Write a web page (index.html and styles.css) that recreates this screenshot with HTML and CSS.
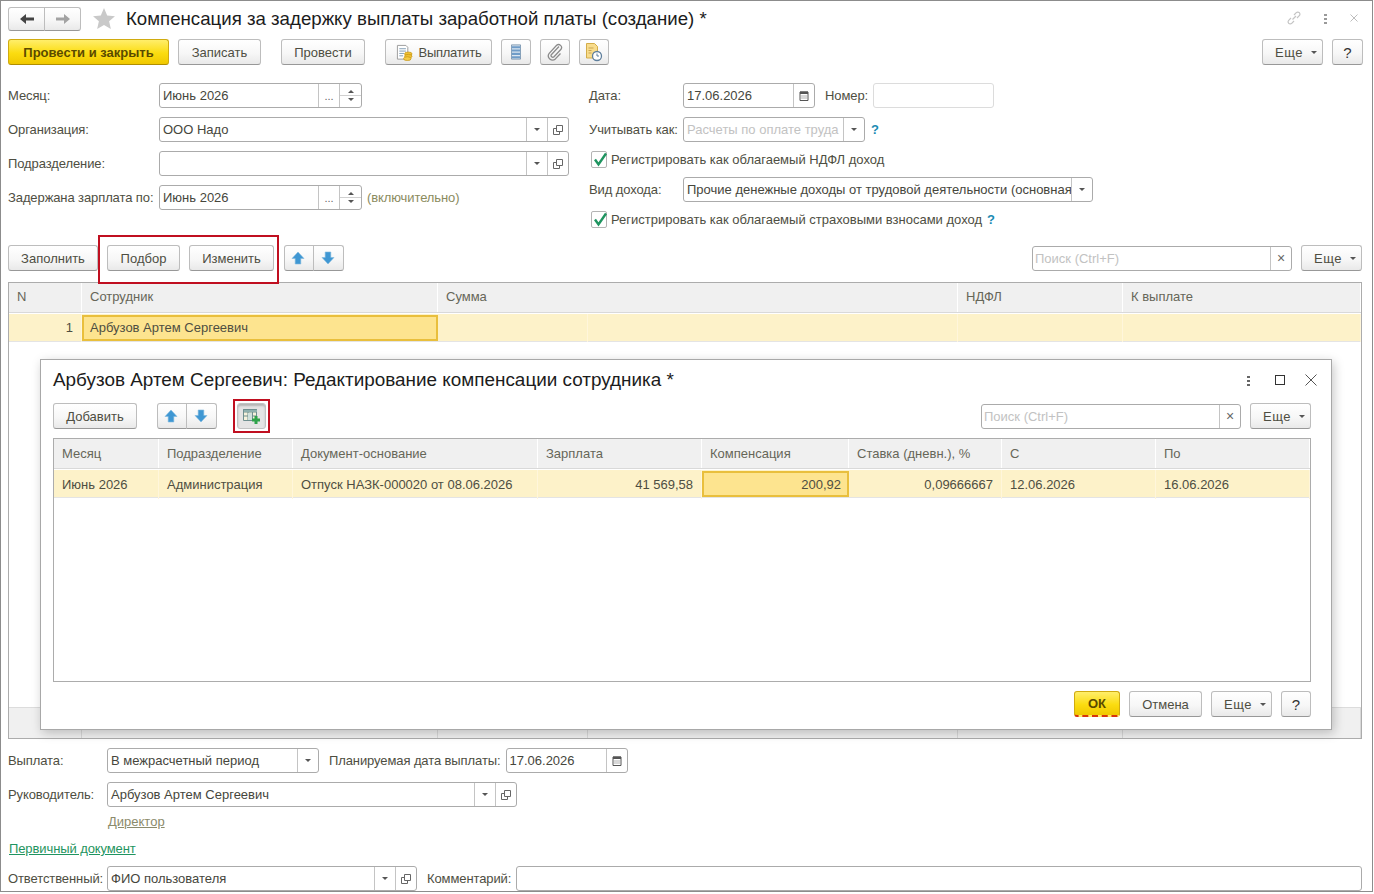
FILE: index.html
```html
<!DOCTYPE html>
<html lang="ru">
<head>
    <meta charset="UTF-8">
    <title>Компенсация за задержку выплаты заработной платы (создание)</title>
    <link rel="stylesheet" href="styles.css">
</head>
<body>
    <svg class="sprite" width="0" height="0">
        <symbol id="i-up" viewBox="0 0 14 14"><path d="M7 1 13 7.500H9.800V13H4.200V7.500H1Z" fill="#3f97d3" stroke="#7fb9de" stroke-width=".6"/></symbol>
        <symbol id="i-down" viewBox="0 0 14 14"><path d="M7 13 13 6.500H9.800V1H4.200V6.500H1Z" fill="#3f97d3" stroke="#7fb9de" stroke-width=".6"/></symbol>
        <symbol id="i-cal" viewBox="0 0 10 11"><path d="M1 2h8v8.500H1z" fill="#fff" stroke="#555"/><path d="M1 1.500h8V4H1z" fill="#555"/><path d="M2.500 5.500h1v1h-1zM4.500 5.500h1v1h-1zM6.500 5.500h1v1h-1zM2.500 7.500h1v1h-1zM4.500 7.500h1v1h-1zM6.500 7.500h1v1h-1z" fill="#666"/></symbol>
        <symbol id="i-open" viewBox="0 0 10 10"><path d="M3.500.500h6v6h-6z" fill="#fff" stroke="#666"/><path d="M.500 3.500h3M.500 3.500v6h6v-3" fill="none" stroke="#666"/></symbol>
    </svg>

    <div class="window">
        <header class="title-bar">
            <div class="btn-group nav-group">
                <button class="btn nav-btn"><svg width="16" height="12" viewBox="0 0 16 12"><path d="M1 6 7 1V4.500H15V7.500H7V11Z" fill="#444"/></svg></button>
                <button class="btn nav-btn"><svg width="16" height="12" viewBox="0 0 16 12"><path d="M15 6 9 1V4.500H1V7.500H9V11Z" fill="#a3a3a3"/></svg></button>
            </div>
            <svg class="star" width="22" height="21" viewBox="0 0 24 23"><path d="M12 0 15.500 8.300 24 9 17.600 14.600 19.500 23 12 18.500 4.500 23 6.400 14.600 0 9 8.500 8.300Z" fill="#c9c9c9"/></svg>
            <h1 class="doc-title">Компенсация за задержку выплаты заработной платы (создание) *</h1>
            <div class="window-tools">
                <svg width="16" height="16" viewBox="0 0 16 16"><path d="M6.500 9.500 10 6M5 8 2.700 10.300a2.100 2.100 0 0 0 3 3L8 11M8 5 10.300 2.700a2.100 2.100 0 0 1 3 3L11 8" fill="none" stroke="#c4c4c4" stroke-width="1.200"/></svg>
                <span class="dots dots-light"></span>
                <svg width="10" height="10" viewBox="0 0 10 10"><path d="M1.500 1.500 8.500 8.500M8.500 1.500 1.500 8.500" stroke="#bdbdbd"/></svg>
            </div>
        </header>

        <div class="command-bar">
            <button class="btn btn-primary btn-post-close">Провести и закрыть</button>
            <button class="btn btn-save">Записать</button>
            <button class="btn btn-post">Провести</button>
            <button class="btn btn-pay">
                <svg width="17" height="17" viewBox="0 0 18 18"><path d="M1.500 1.500h9l2 2V16h-11z" fill="#fff" stroke="#9a9a9a"/><path d="M3.500 5h7M3.500 7.500h7M3.500 10h5M3.500 12.500h4" stroke="#7d9bb5"/><ellipse cx="13" cy="10.500" rx="4" ry="2" fill="#f1c232" stroke="#c08f10" stroke-width=".7"/><ellipse cx="13" cy="13" rx="4" ry="2" fill="#f1c232" stroke="#c08f10" stroke-width=".7"/><ellipse cx="12" cy="15.500" rx="4" ry="2" fill="#f5cc47" stroke="#c08f10" stroke-width=".7"/></svg>
                <span>Выплатить</span>
            </button>
            <button class="btn btn-icon">
                <svg width="10" height="16" viewBox="0 0 12 18"><path d="M.500 .500h11v17H.500z" fill="#dbe6f0" stroke="#6d8aa6"/><path d="M1 2h10v2.500H1zM1 6h10v2.500H1zM1 10h10v2.500H1zM1 14h10v2.500H1z" fill="#6f9cc8"/></svg>
            </button>
            <button class="btn btn-icon">
                <svg width="18" height="18" viewBox="0 0 18 18"><path d="M13 3.500 5.500 11.500a1.700 1.700 0 0 0 2.500 2.300L15 6.300a3 3 0 0 0-4.400-4L3.200 10.300a4.200 4.200 0 0 0 6.200 5.600L14.500 10.500" fill="none" stroke="#8b8b8b" stroke-width="1.300"/></svg>
            </button>
            <button class="btn btn-icon">
                <svg width="18" height="20" viewBox="0 0 18 20"><path d="M1.500 1.500h8l3 3V16h-11z" fill="#f8dc8c" stroke="#d3ad4a"/><path d="M3.500 6h5M3.500 8.500h3M3.500 11h3" stroke="#c9a550"/><circle cx="12" cy="14" r="4.500" fill="#fff" stroke="#5f7f9c" stroke-width="1.300"/><path d="M12 11.500V14H14" fill="none" stroke="#5f7f9c"/></svg>
            </button>
            <button class="btn btn-more push-right"><span>Еще</span><i class="caret"></i></button>
            <button class="btn btn-help">?</button>
        </div>

        <div class="form-top">
            <div class="form-col form-left">
                <div class="form-row">
                    <label>Месяц:</label>
                    <div class="field field-month"><span class="field-text">Июнь 2026</span><span class="field-btn">...</span><span class="field-spin"><i class="tri-up"></i><i class="tri-down"></i></span></div>
                </div>
                <div class="form-row">
                    <label>Организация:</label>
                    <div class="field field-org"><span class="field-text">ООО Надо</span><span class="field-btn"><i class="tri-down"></i></span><span class="field-btn"><svg width="10" height="10"><use href="#i-open"/></svg></span></div>
                </div>
                <div class="form-row">
                    <label>Подразделение:</label>
                    <div class="field field-org"><span class="field-text"></span><span class="field-btn"><i class="tri-down"></i></span><span class="field-btn"><svg width="10" height="10"><use href="#i-open"/></svg></span></div>
                </div>
                <div class="form-row">
                    <label>Задержана зарплата по:</label>
                    <div class="field field-month"><span class="field-text">Июнь 2026</span><span class="field-btn">...</span><span class="field-spin"><i class="tri-up"></i><i class="tri-down"></i></span></div>
                    <span class="note">(включительно)</span>
                </div>
            </div>

            <div class="form-col form-right">
                <div class="form-row">
                    <label>Дата:</label>
                    <div class="field field-date"><span class="field-text">17.06.2026</span><span class="field-btn"><svg width="10" height="11"><use href="#i-cal"/></svg></span></div>
                    <span class="inline-label">Номер:</span>
                    <div class="field field-number"></div>
                </div>
                <div class="form-row">
                    <label>Учитывать как:</label>
                    <div class="field field-account"><span class="field-text is-disabled">Расчеты по оплате труда</span><span class="field-btn"><i class="tri-down"></i></span></div>
                    <span class="hint hint-account">?</span>
                </div>
                <div class="check-row">
                    <span class="checkbox"><svg width="16" height="16" viewBox="0 0 16 16"><path d="M3 7.500 6.500 12.500 14 1.500" fill="none" stroke="#1f9460" stroke-width="2.400"/></svg></span>
                    <span>Регистрировать как облагаемый НДФЛ доход</span>
                </div>
                <div class="form-row">
                    <label>Вид дохода:</label>
                    <div class="field field-income"><span class="field-text">Прочие денежные доходы от трудовой деятельности (основная</span><span class="field-btn"><i class="tri-down"></i></span></div>
                </div>
                <div class="check-row">
                    <span class="checkbox"><svg width="16" height="16" viewBox="0 0 16 16"><path d="M3 7.500 6.500 12.500 14 1.500" fill="none" stroke="#1f9460" stroke-width="2.400"/></svg></span>
                    <span>Регистрировать как облагаемый страховыми взносами доход</span>
                    <span class="hint">?</span>
                </div>
            </div>
        </div>

        <div class="table-bar">
            <button class="btn btn-fill">Заполнить</button>
            <button class="btn btn-pick">Подбор</button>
            <button class="btn btn-edit">Изменить</button>
            <div class="btn-group arrows">
                <button class="btn arrow-btn"><svg width="14" height="14"><use href="#i-up"/></svg></button>
                <button class="btn arrow-btn"><svg width="14" height="14"><use href="#i-down"/></svg></button>
            </div>
            <div class="field field-search push-right"><span class="field-text is-placeholder">Поиск (Ctrl+F)</span><span class="field-btn clear-x">×</span></div>
            <button class="btn btn-more"><span>Еще</span><i class="caret"></i></button>
        </div>

        <div class="grid-table main-table">
            <div class="grid-head">
                <div>N</div><div>Сотрудник</div><div class="span-2">Сумма</div><div>НДФЛ</div><div>К выплате</div>
            </div>
            <div class="grid-row">
                <div class="num">1</div><div class="cell-active">Арбузов Артем Сергеевич</div><div></div><div></div><div></div><div></div>
            </div>
            <div class="grid-foot">
                <div></div><div></div><div></div><div></div><div></div><div></div>
            </div>
        </div>

        <div class="form-row bottom-first">
            <label class="label-bottom">Выплата:</label>
            <div class="field field-pay"><span class="field-text">В межрасчетный период</span><span class="field-btn"><i class="tri-down"></i></span></div>
            <span class="inline-label">Планируемая дата выплаты:</span>
            <div class="field field-paydate"><span class="field-text">17.06.2026</span><span class="field-btn"><svg width="10" height="11"><use href="#i-cal"/></svg></span></div>
        </div>
        <div class="form-row bottom-row">
            <label class="label-bottom">Руководитель:</label>
            <div class="field field-head"><span class="field-text">Арбузов Артем Сергеевич</span><span class="field-btn"><i class="tri-down"></i></span><span class="field-btn"><svg width="10" height="10"><use href="#i-open"/></svg></span></div>
        </div>
        <a class="link-post">Директор</a>
        <a class="link-doc">Первичный документ</a>
        <div class="form-row bottom-last">
            <label class="label-bottom">Ответственный:</label>
            <div class="field field-user"><span class="field-text">ФИО пользователя</span><span class="field-btn"><i class="tri-down"></i></span><span class="field-btn"><svg width="10" height="10"><use href="#i-open"/></svg></span></div>
            <span class="inline-label">Комментарий:</span>
            <div class="field field-comment"></div>
        </div>

        <!-- annotation over the main toolbar -->
        <div class="red-box red-box-main"></div>

        <section class="dialog">
            <header class="dialog-head">
                <h2 class="dialog-title">Арбузов Артем Сергеевич: Редактирование компенсации сотрудника *</h2>
                <div class="dialog-tools">
                    <span class="dots"></span>
                    <span class="maximize"></span>
                    <svg width="12" height="12" viewBox="0 0 12 12"><path d="M.500 .500 11.500 11.500M11.500 .500 .500 11.500" stroke="#555"/></svg>
                </div>
            </header>
            <div class="dialog-bar">
                <button class="btn btn-add">Добавить</button>
                <div class="btn-group arrows-dialog">
                    <button class="btn arrow-btn"><svg width="14" height="14"><use href="#i-up"/></svg></button>
                    <button class="btn arrow-btn"><svg width="14" height="14"><use href="#i-down"/></svg></button>
                </div>
                <button class="btn btn-table-add">
                    <svg width="18" height="16" viewBox="0 0 18 16"><path d="M.500 1.500h13v11H.500z" fill="#f6f2dc" stroke="#6f8f8f"/><path d="M.500 1.500h13V4H.500zM5 1.500v11M9.500 1.500v11M.500 8h13" fill="none" stroke="#6f8f8f"/><path d="M1 2h13v2H1z" fill="#8fb0ae"/><path d="M5 5h4v7H5z" fill="#cfe0dc"/><path d="M11.500 8h3v2.500H17v3h-2.500V16h-3v-2.500H9v-3h2.500z" fill="#2fa24a"/></svg>
                </button>
                <div class="field field-search push-right"><span class="field-text is-placeholder">Поиск (Ctrl+F)</span><span class="field-btn clear-x">×</span></div>
                <button class="btn btn-more"><span>Еще</span><i class="caret"></i></button>
            </div>
            <div class="grid-table dialog-table">
                <div class="grid-head">
                    <div>Месяц</div><div>Подразделение</div><div>Документ-основание</div><div>Зарплата</div><div>Компенсация</div><div>Ставка (дневн.), %</div><div>С</div><div>По</div>
                </div>
                <div class="grid-row">
                    <div>Июнь 2026</div><div>Администрация</div><div>Отпуск НАЗК-000020 от 08.06.2026</div><div class="num">41 569,58</div><div class="num cell-active">200,92</div><div class="num">0,09666667</div><div>12.06.2026</div><div>16.06.2026</div>
                </div>
            </div>
            <div class="dialog-actions">
                <button class="btn btn-primary btn-ok">ОК</button>
                <button class="btn btn-cancel">Отмена</button>
                <button class="btn btn-more"><span>Еще</span><i class="caret"></i></button>
                <button class="btn btn-help">?</button>
            </div>
            <div class="red-box red-box-dialog"></div>
        </section>
    </div>
</body>
</html>
```

FILE: styles.css
```css
* {
    box-sizing: border-box;
}
html, body {
    margin: 0;
    background: #fff;
}
body {
    font-family: "Liberation Sans", Arial, sans-serif;
    font-size: 13px;
    color: #4e4e42;
}
.sprite {
    position: absolute;
}
.window {
    position: relative;
    width: 1373px;
    height: 892px;
    padding: 0 9px 0 7px;
    border: 1px solid #8c8c8c;
    display: flex;
    flex-direction: column;
}
label {
    white-space: nowrap;
    letter-spacing: -0.1px;
}

/* Buttons */
.btn {
    display: inline-flex;
    align-items: center;
    justify-content: center;
    height: 26px;
    padding: 0;
    font: inherit;
    color: #4e4e42;
    background: linear-gradient(#fff, #f7f7f7 55%, #e9e9e9);
    border: 1px solid #bdbdbd;
    border-bottom-color: #989898;
    border-radius: 3px;
    flex: none;
}
.btn-primary {
    color: #5a4a00;
    font-weight: bold;
    background: linear-gradient(#ffee6a, #fbdc10 55%, #f0c800);
    border-color: #d0ab10;
    border-bottom-color: #b08e00;
}
.btn-post-close { width: 161px; }
.btn-save { width: 83px; margin-left: 9px; }
.btn-post { width: 84px; margin-left: 20px; }
.btn-pay { width: 107px; margin-left: 20px; gap: 6px; letter-spacing: -0.3px; }
.btn-icon { width: 30px; margin-left: 9px; }
.btn-more { width: 61px; gap: 8px; padding-left: 7px; letter-spacing: 0.5px; }
.btn-help { width: 31px; margin-left: 9px; color: #333; font-size: 15px; }
.push-right { margin-left: auto; }
.caret {
    width: 0;
    height: 0;
    border: 3px solid transparent;
    border-top: 3px solid #555;
    border-bottom: 0;
}
.btn-group {
    display: flex;
    flex: none;
}
.btn-group .btn {
    border-radius: 0;
}
.btn-group .btn:first-child {
    border-radius: 3px 0 0 3px;
}
.btn-group .btn:last-child {
    margin-left: -1px;
    border-radius: 0 3px 3px 0;
}

/* Title */
.title-bar {
    height: 38px;
    display: flex;
    align-items: center;
    flex: none;
}
.nav-group {
    margin-top: -3px;
}
.nav-btn {
    width: 37px;
    height: 24px;
}
.star {
    margin-left: 12px;
    margin-top: -3px;
}
.doc-title {
    margin: -3px 0 0 11px;
    font-size: 18.67px;
    font-weight: normal;
    color: #1c1c1c;
}
.window-tools {
    margin-left: auto;
    margin-right: 4px;
    display: flex;
    align-items: center;
    gap: 22px;
    margin-top: -4px;
}
.dots {
    width: 3px;
    height: 11px;
    background: radial-gradient(circle, #666 1.400px, transparent 1.500px) 0 0 / 3px 4px;
}
.dots-light {
    background-image: radial-gradient(circle, #9a9a9a 1.400px, transparent 1.500px);
}

.command-bar {
    height: 26px;
    margin-top: 0;
    display: flex;
    flex: none;
}

/* Form */
.form-top {
    display: flex;
    margin-top: 18px;
    flex: none;
}
.form-col {
    display: flex;
    flex-direction: column;
    gap: 9px;
}
.form-left {
    width: 581px;
}
.form-row {
    display: flex;
    align-items: center;
    height: 25px;
    flex: none;
}
.form-left label {
    width: 151px;
    flex: none;
}
.form-right label {
    width: 94px;
    flex: none;
}
.note {
    margin-left: 5px;
    color: #8b8b5e;
    letter-spacing: -0.1px;
}
.inline-label {
    margin-left: 10px;
    margin-right: 5px;
    white-space: nowrap;
    letter-spacing: -0.1px;
}
.check-row {
    display: flex;
    align-items: center;
    height: 17px;
    flex: none;
    white-space: nowrap;
}
.checkbox {
    width: 16px;
    height: 17px;
    margin: 0 4px 0 2px;
    border: 1px solid #b4b4b4;
    border-radius: 2px;
    background: #fff;
    flex: none;
}
.checkbox svg {
    display: block;
}
.hint {
    margin-left: 5px;
    color: #1b8bb3;
    font-weight: bold;
}
.hint-account {
    margin-left: 6px;
}

/* Fields */
.field {
    display: flex;
    height: 25px;
    background: #fff;
    border: 1px solid #ababab;
    border-radius: 3px;
    flex: none;
    overflow: hidden;
}
.field-text {
    flex: 1;
    min-width: 0;
    padding-left: 3px;
    line-height: 23px;
    color: #46463c;
    white-space: nowrap;
    overflow: hidden;
}
.field-btn {
    width: 21px;
    display: flex;
    align-items: center;
    justify-content: center;
    border-left: 1px solid #c4c4c4;
    color: #666;
    flex: none;
    font-size: 11px;
}
.field-spin {
    width: 22px;
    display: flex;
    flex-direction: column;
    align-items: center;
    justify-content: space-around;
    padding: 3px 0;
    border-left: 1px solid #c4c4c4;
    background: linear-gradient(transparent 11px, #d0d0d0 11px, #d0d0d0 12px, transparent 12px);
    flex: none;
}
.tri-up, .tri-down {
    width: 0;
    height: 0;
    border: 3px solid transparent;
}
.tri-up {
    border-top: 0;
    border-bottom: 3px solid #555;
}
.tri-down {
    border-bottom: 0;
    border-top: 3px solid #555;
}
.is-disabled, .is-placeholder {
    color: #c2c2c2;
}
.is-placeholder {
    padding-left: 2px;
}
.clear-x {
    font-size: 14px;
}
.field-month { width: 203px; }
.field-org { width: 410px; }
.field-date { width: 132px; }
.field-number { width: 121px; border-color: #dcdcdc; }
.field-account { width: 182px; }
.field-income { width: 410px; }
.field-search { width: 260px; }
.field-pay { width: 212px; }
.field-paydate { width: 122px; }
.field-head { width: 410px; }
.field-user { width: 310px; }
.field-comment { flex: 1; margin-right: 1px; }

/* Table toolbar */
.table-bar {
    display: flex;
    align-items: center;
    height: 26px;
    margin-top: 17px;
    margin-right: 1px;
    flex: none;
}
.btn-fill { width: 90px; }
.btn-pick { width: 73px; margin-left: 9px; }
.btn-edit { width: 85px; margin-left: 9px; }
.arrows { margin-left: 10px; }
.arrow-btn { width: 30px; padding-right: 2px; }
.btn-group .arrow-btn:last-child { width: 31px; }
.table-bar .btn-more { margin-left: 9px; }

/* Tables */
.grid-table {
    display: flex;
    flex-direction: column;
    border: 1px solid #acacac;
    flex: none;
}
.grid-head, .grid-row, .grid-foot {
    display: grid;
    flex: none;
}
.grid-head {
    height: 30px;
    background: #f0f0f0;
    border-bottom: 1px solid #d9d9d9;
    color: #666658;
}
.grid-head > div {
    padding-left: 8px;
    line-height: 28px;
    border-right: 1px solid #fff;
}
.grid-row {
    height: 28px;
    margin-top: 1px;
    background: #fdf2c9;
    border-bottom: 1px solid #e4e4e4;
}
.grid-row > div {
    padding: 0 8px;
    line-height: 28px;
    border-right: 1px solid #fff6db;
    white-space: nowrap;
}
.grid-foot {
    margin-top: auto;
    height: 31px;
    background: #f0f0f0;
    border-top: 1px solid #dcdcdc;
}
.grid-foot > div {
    border-right: 1px solid #d8d8d8;
}
.grid-row .cell-active {
    background: #fde48f;
    border: 2px solid #e9bf3c;
    line-height: 22px;
    padding: 0 6px;
    margin: 1px 0 0;
    height: 26px;
}
.num {
    text-align: right;
}
.span-2 {
    grid-column: span 2;
}
.main-table {
    width: 1354px;
    height: 457px;
    margin-top: 11px;
}
.main-table .grid-head, .main-table .grid-row, .main-table .grid-foot {
    grid-template-columns: 73px 356px 150px 370px 165px 1fr;
}
.dialog-table .grid-head, .dialog-table .grid-row {
    grid-template-columns: 105px 134px 245px 164px 147px 153px 154px 1fr;
}
.dialog-table {
    height: 244px;
    margin-top: 9px;
}
.dialog-table .grid-head > div {
    line-height: 29px;
}
.dialog-table .grid-row > div {
    line-height: 29px;
}
.dialog-table .grid-row .cell-active {
    line-height: 23px;
}

/* Bottom of the form */
.label-bottom {
    width: 99px;
    flex: none;
}
.bottom-first {
    margin-top: 9px;
}
.bottom-row {
    margin-top: 9px;
}
.link-post {
    margin: 7px 0 0 100px;
    line-height: 16px;
    color: #8b8b6c;
    text-decoration: underline;
    align-self: flex-start;
}
.link-doc {
    margin: 11px 0 0 1px;
    line-height: 16px;
    color: #1f9460;
    text-decoration: underline;
    align-self: flex-start;
    letter-spacing: -0.1px;
}
.bottom-last {
    margin-top: 9px;
}

/* Dialog over the form */
.dialog {
    position: absolute;
    left: 39px;
    top: 358px;
    width: 1292px;
    height: 371px;
    padding: 0 20px 0 12px;
    background: #fff;
    border: 1px solid #a8a8a8;
    box-shadow: 2px 3px 10px rgba(0, 0, 0, 0.22);
    display: flex;
    flex-direction: column;
}
.dialog-head {
    height: 40px;
    margin-bottom: 3px;
    display: flex;
    align-items: center;
    flex: none;
}
.dialog-title {
    margin: 0;
    font-size: 18.9px;
    font-weight: normal;
    color: #1c1c1c;
}
.dialog-tools {
    margin-left: auto;
    display: flex;
    align-items: center;
    gap: 20px;
    margin-right: -6px;
}
.dialog-tools .dots {
    margin-right: 5px;
}
.maximize {
    width: 10px;
    height: 10px;
    border: 1px solid #333;
}
.dialog-bar {
    display: flex;
    align-items: center;
    height: 26px;
    flex: none;
}
.dialog-bar .btn-more { margin-left: 9px; }
.btn-add { width: 84px; }
.arrows-dialog { margin-left: 20px; }
.btn-table-add {
    width: 29px;
    margin-left: 20px;
    background: #e4e4e4;
    border-color: #c2c2c2;
    box-shadow: inset 0 2px 2px #b5b5b5;
}
.dialog-actions {
    display: flex;
    justify-content: flex-end;
    margin-top: 9px;
    flex: none;
}
.btn-ok {
    width: 46px;
    border-bottom: 2px dashed #d8340c;
}
.btn-cancel { width: 73px; margin-left: 9px; }
.dialog-actions .btn-more { margin-left: 9px; }
.dialog-actions .btn-help { width: 30px; }

/* Red annotation frames */
.red-box {
    position: absolute;
    border: 2px solid #c00f20;
    pointer-events: none;
}
.red-box-main {
    left: 97px;
    top: 234px;
    width: 181px;
    height: 49px;
}
.red-box-dialog {
    left: 192px;
    top: 39px;
    width: 37px;
    height: 34px;
}
```
